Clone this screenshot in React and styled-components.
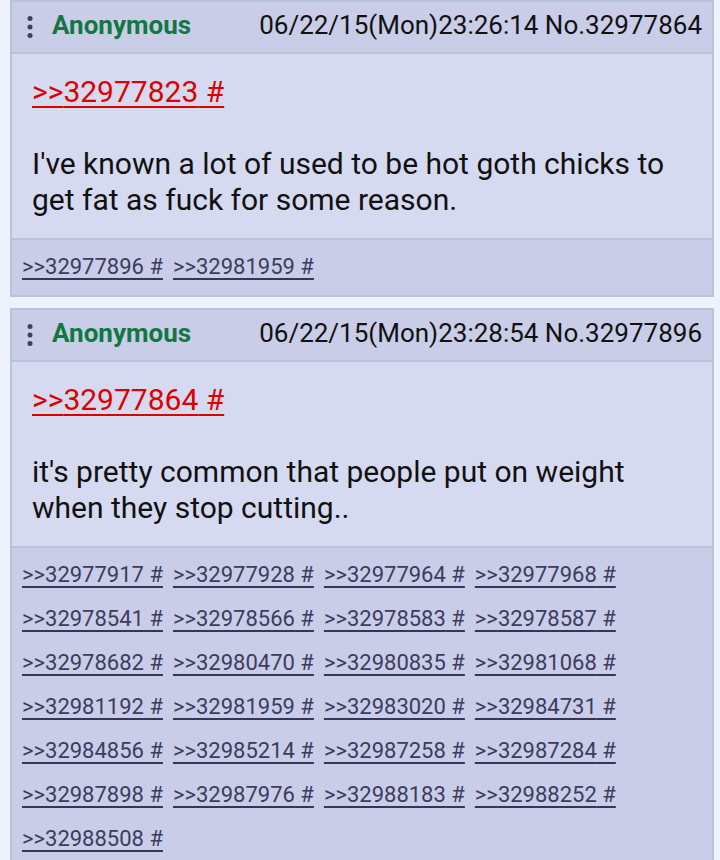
import styled, { createGlobalStyle } from 'styled-components';

const GlobalStyle = createGlobalStyle`
    body {
        margin: 0;
        background: #eef2fc;
        font-family: Roboto, "Noto Sans", sans-serif;
    }
`

const Thread = styled.div`
    display: flex;
    flex-direction: column;
    gap: 11px;
    padding: 0 6px 0 10px;
`

const Post = styled.div`
    border: 2px solid #b7c5d9;
    background: #d6daf0;
`

const Header = styled.div`
    height: 52px;
    box-sizing: border-box;
    display: flex;
    flex-direction: row;
    align-items: center;
    padding: 0 10px 5px 11px;
    background: #c9cde8;
    border-bottom: 2px solid #b7c5d9;
    font-size: 26px;
`

const Menu = styled.svg`
    width: 14px;
    height: 30px;
    margin: 5px 15px 0 0;
    flex-shrink: 0;
`

const Name = styled.span`
    color: #117743;
    font-weight: bold;
`

const Meta = styled.span`
    margin-left: auto;
    color: #111;
`

const Body = styled.div`
    padding: 20px 20px;
    font-size: 30px;
    line-height: 36px;
    color: #111;
`

const QuoteLink = styled.a`
    color: #dd0000;
    text-decoration: underline;
    text-decoration-thickness: 2px;
    text-underline-offset: 4px;
`

const Replies = styled.div`
    display: flex;
    flex-wrap: wrap;
    column-gap: 10px;
    padding: 5px 10px 6px;
    background: #c9cde8;
    border-top: 2px solid #b7c5d9;
`

const ReplyLink = styled.a`
    font-size: 22px;
    line-height: 44px;
    color: #3c3c5e;
    text-decoration: underline;
    text-decoration-color: #34345c;
    text-decoration-thickness: 2px;
    text-underline-offset: 4px;
`

const MenuDots = () => (
    <Menu viewBox="0 0 14 30">
        <circle cx="7" cy="6.5" r="2.5" fill="#3d4063" />
        <circle cx="7" cy="15" r="2.5" fill="#3d4063" />
        <circle cx="7" cy="23.5" r="2.5" fill="#3d4063" />
    </Menu>
)

const posts = [
    {
        meta: '06/22/15(Mon)23:26:14 No.32977864',
        quote: '32977823',
        text: "I've known a lot of used to be hot goth chicks to get fat as fuck for some reason.",
        replies: ['32977896', '32981959'],
    },
    {
        meta: '06/22/15(Mon)23:28:54 No.32977896',
        quote: '32977864',
        text: "it's pretty common that people put on weight when they stop cutting..",
        replies: [
            '32977917', '32977928', '32977964', '32977968',
            '32978541', '32978566', '32978583', '32978587',
            '32978682', '32980470', '32980835', '32981068',
            '32981192', '32981959', '32983020', '32984731',
            '32984856', '32985214', '32987258', '32987284',
            '32987898', '32987976', '32988183', '32988252',
            '32988508',
        ],
    },
]

const App = () => {
    return(
        <>
            <GlobalStyle />
            <Thread>
                { posts.map(post => (
                    <Post key={ post.meta }>
                        <Header>
                            <MenuDots />
                            <Name>Anonymous</Name>
                            <Meta>{ post.meta }</Meta>
                        </Header>
                        <Body>
                            <QuoteLink>&gt;&gt;{ post.quote } #</QuoteLink>
                            <br /><br />
                            { post.text }
                        </Body>
                        <Replies>
                            { post.replies.map(r => (
                                <ReplyLink key={ r }>&gt;&gt;{ r } #</ReplyLink>
                            )) }
                        </Replies>
                    </Post>
                )) }
            </Thread>
        </>
    )
}

export default App
